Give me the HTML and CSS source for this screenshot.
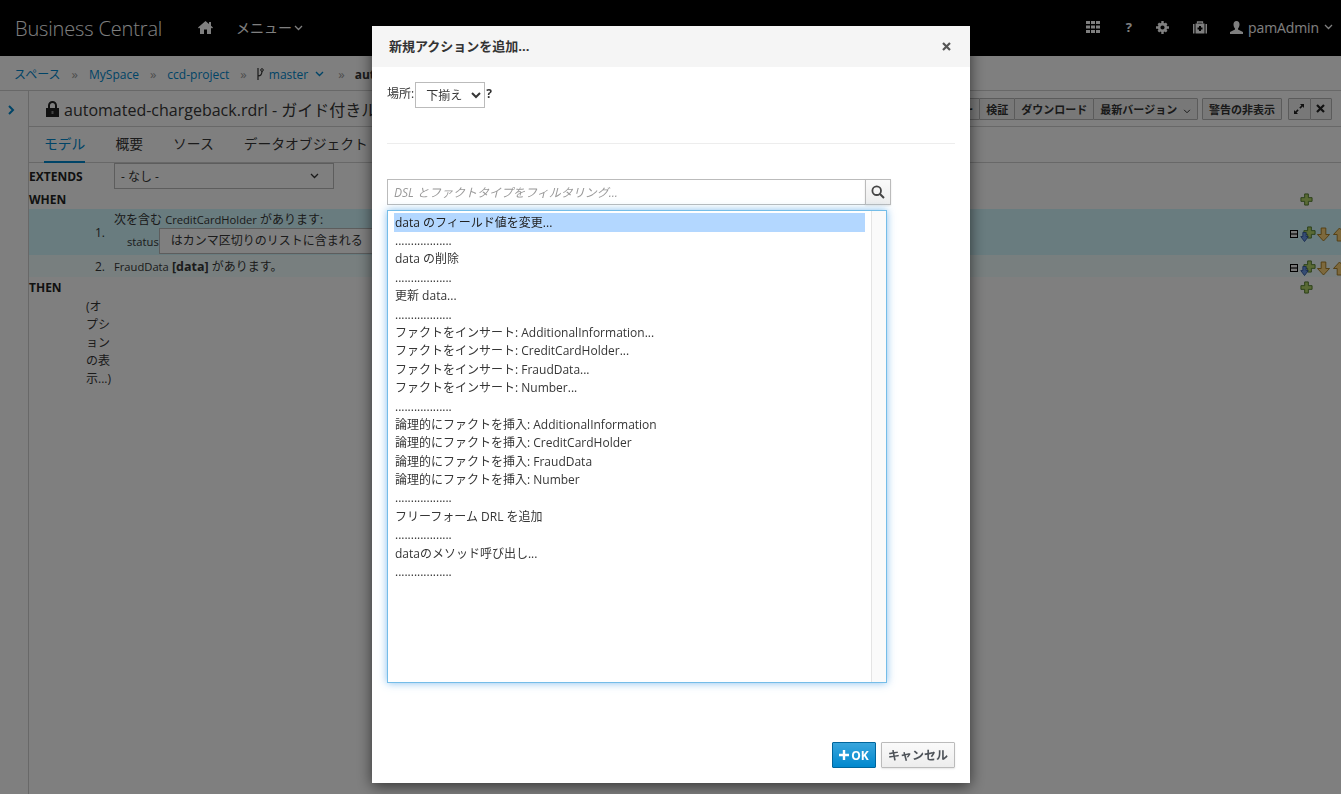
FILE: index.html
```html
<!DOCTYPE html>
<html>
<head>
  <meta charset="UTF-8">
  <title>Business Central</title>
  <link rel="stylesheet" href="styles.css">
</head>
<body>
  <svg class="defs" width="0" height="0">
    <symbol id="green-plus" viewBox="0 0 14 14">
      <path d="M5 1h4v4h4v4H9v4H5V9H1V5h4z" fill="#b5d56a" stroke="#4f7a28"/>
    </symbol>
    <symbol id="blue-down" viewBox="0 0 10 12">
      <path d="M3 .5h4v5h2.500L5 11.500.5 5.500H3z" fill="#6d9be8" stroke="#2a4f9c"/>
    </symbol>
    <symbol id="orange-down" viewBox="0 0 14 15">
      <path d="M4.500 .5h5v7H13.500L7 14.500.5 7.500h4z" fill="#fbd27a" stroke="#a67a1e"/>
    </symbol>
    <symbol id="orange-up" viewBox="0 0 14 15">
      <path d="M4.500 14.500h5v-7H13.500L7 .5.5 7.500h4z" fill="#fbd27a" stroke="#a67a1e"/>
    </symbol>
  </svg>

  <header class="topbar">
    <span class="brand">Business Central</span>
    <svg class="home-icon" width="15" height="13" viewBox="0 0 15 13"><path d="M7.500 0 0 6.500l1 1 1-.8V13h4V8.500h3V13h4V6.700l1 .8 1-1-2-1.800V1h-2v2z" fill="#fff"/></svg>
    <span class="nav-menu">メニュー</span>
    <svg class="chevron" width="9" height="6" viewBox="0 0 9 6"><path d="M1 1l3.500 3.500L8 1" fill="none" stroke="#fff" stroke-width="1.300"/></svg>
    <div class="topbar-right">
      <svg class="grid-icon" width="14" height="12" viewBox="0 0 14 12"><path d="M0 0h4v3H0zM5 0h4v3H5zM10 0h4v3h-4zM0 4.500h4v3H0zM5 4.500h4v3H5zM10 4.500h4v3h-4zM0 9h4v3H0zM5 9h4v3H5zM10 9h4v3h-4z" fill="#fff"/></svg>
      <span class="help-mark">?</span>
      <svg width="13" height="13" viewBox="0 0 13 13"><circle cx="6.500" cy="6.500" r="3.400" fill="none" stroke="#fff" stroke-width="2.600"/><path d="M5.300 0h2.400v2.500H5.300zM5.300 10.500h2.400V13H5.300zM0 5.300h2.500v2.400H0zM10.500 5.300H13v2.400h-2.500zM1.500 3.200 3.200 1.500 5 3.300 3.300 5zM9.800 11.500 11.500 9.800 9.700 8 8 9.700zM1.500 9.800 3.200 11.500 5 9.700 3.300 8zM9.800 1.500 11.500 3.200 9.700 5 8 3.300z" fill="#fff"/></svg>
      <svg width="14" height="13" viewBox="0 0 14 13"><path d="M4.500 2.500V1h5v1.500" fill="none" stroke="#fff" stroke-width="1.300"/><rect x="2.500" y="2.500" width="9" height="10" fill="#fff"/><rect x="0" y="3" width="1.500" height="9.500" fill="#fff"/><rect x="12.500" y="3" width="1.500" height="9.500" fill="#fff"/><path d="M6 5h2v1.500h1.500v2H8V10H6V8.500H4.500v-2H6z" fill="#000"/></svg>
      <span class="user-block">
        <svg width="13" height="13" viewBox="0 0 13 13"><path d="M6.500 0C8.500 0 9.500 1.500 9.500 3.500S8.500 7 8 7.500v1l5 2.500v2H0v-2l5-2.500v-1C4.500 7 3.500 5.500 3.500 3.500S4.500 0 6.500 0z" fill="#fff"/></svg>
        <span class="user-name">pamAdmin</span>
        <svg class="chevron" width="9" height="6" viewBox="0 0 9 6"><path d="M1 1l3.500 3.500L8 1" fill="none" stroke="#fff" stroke-width="1.300"/></svg>
      </span>
    </div>
  </header>

  <nav class="crumbs">
    <a>スペース</a><span class="sep">»</span>
    <a>MySpace</a><span class="sep">»</span>
    <a>ccd-project</a><span class="sep">»</span>
    <svg class="branch-icon" width="8" height="12" viewBox="0 0 8 12"><path d="M2 0v12M2 8c3 0 4-2 4-5" fill="none" stroke="#333" stroke-width="1.200"/><circle cx="6" cy="2" r="1.300" fill="none" stroke="#333"/></svg>
    <a>master</a>
    <svg class="crumb-chevron" width="9" height="6" viewBox="0 0 9 6"><path d="M1 1l3.500 3.500L8 1" fill="none" stroke="#0088ce" stroke-width="1.400"/></svg>
    <span class="sep last-sep">»</span>
    <b>automated-chargeback.rdrl</b>
  </nav>

  <div class="workspace">
    <aside class="side-rail">
      <svg width="7" height="10" viewBox="0 0 7 10"><path d="M1 1l4 4-4 4" fill="none" stroke="#0088ce" stroke-width="2"/></svg>
    </aside>
    <main class="editor">
      <div class="title-row">
        <svg class="lock-icon" width="13" height="16" viewBox="0 0 13 16"><path d="M3 7V4.500a3.500 3.500 0 0 1 7 0V7" fill="none" stroke="#222" stroke-width="2"/><path d="M0 7h13v9H0z" fill="#222"/><rect x="5.500" y="10" width="2" height="3" fill="#888"/></svg>
        <span class="file-title">automated-chargeback.rdrl - ガイド付きルール</span>
        <div class="toolbar">
          <div class="btn-group">
            <button>保存</button><button>削除</button><button>名前の変更</button><button>コピー</button><button>検証</button><button>ダウンロード</button><button class="version-btn">最新バージョン
              <svg width="8" height="5" viewBox="0 0 9 6"><path d="M1 1l3.500 3.500L8 1" fill="none" stroke="#333" stroke-width="1.200"/></svg></button>
          </div>
          <button class="hide-alerts">警告の非表示</button>
          <div class="btn-group">
            <button class="icon-btn"><svg width="10" height="10" viewBox="0 0 10 10"><path d="M6 0h4v4L8.600 2.600 6.500 4.700 5.300 3.500 7.400 1.400zM4 10H0V6l1.400 1.400 2.100-2.100 1.200 1.200-2.100 2.100z" fill="#222"/></svg></button><button class="icon-btn"><svg width="9" height="9" viewBox="0 0 9 9"><path d="M1 1l7 7M8 1 1 8" stroke="#222" stroke-width="2.200"/></svg></button>
          </div>
        </div>
      </div>
      <div class="tabs">
        <a class="tab active">モデル</a>
        <a class="tab">概要</a>
        <a class="tab">ソース</a>
        <a class="tab">データオブジェクト</a>
      </div>
      <section class="rule-area">
        <div class="extends-row">
          <b class="rule-word extends-word">EXTENDS</b>
          <div class="fake-select">- なし -
            <svg width="9" height="6" viewBox="0 0 9 6"><path d="M1 1l3.500 3.500L8 1" fill="none" stroke="#333" stroke-width="1.300"/></svg>
          </div>
        </div>
        <div class="section-row">
          <b class="rule-word">WHEN</b>
          <svg class="row-plus" width="13" height="13"><use href="#green-plus"/></svg>
        </div>
        <div class="rule-row selected">
          <span class="rule-num">1.</span>
          <div class="rule-body">
            <div>次を含む <span class="latin">CreditCardHolder</span> があります:</div>
            <div class="field-line"><span class="latin">status</span><span class="op-select">はカンマ区切りのリストに含まれる</span></div>
          </div>
          <div class="row-tools">
            <span class="minus-box"></span>
            <span class="plus-down"><svg class="pd-plus" width="13" height="13"><use href="#green-plus"/></svg><svg class="pd-down" width="9" height="10"><use href="#blue-down"/></svg></span>
            <svg class="arrow-down" width="13" height="15"><use href="#orange-down"/></svg>
            <svg class="arrow-up" width="13" height="15"><use href="#orange-up"/></svg>
          </div>
        </div>
        <div class="rule-row plain">
          <span class="rule-num">2.</span>
          <div class="rule-body"><span class="latin">FraudData</span> <b class="data-tag">[data]</b> があります。</div>
          <div class="row-tools">
            <span class="minus-box"></span>
            <span class="plus-down"><svg class="pd-plus" width="13" height="13"><use href="#green-plus"/></svg><svg class="pd-down" width="9" height="10"><use href="#blue-down"/></svg></span>
            <svg class="arrow-down" width="13" height="15"><use href="#orange-down"/></svg>
            <svg class="arrow-up" width="13" height="15"><use href="#orange-up"/></svg>
          </div>
        </div>
        <div class="section-row">
          <b class="rule-word">THEN</b>
          <svg class="row-plus" width="13" height="13"><use href="#green-plus"/></svg>
        </div>
        <div class="show-options">(オプションの表示...)</div>
      </section>
    </main>
  </div>

  <div class="backdrop"></div>

  <div class="modal">
    <div class="modal-header">
      <span class="modal-title">新規アクションを追加...</span>
      <svg width="9" height="9" viewBox="0 0 9 9"><path d="M1 1l7 7M8 1 1 8" stroke="#555" stroke-width="2.200"/></svg>
    </div>
    <div class="modal-body">
      <div class="place-row">
        <span class="place-label">場所:</span>
        <select class="place-select"><option>下揃え</option></select>
        <b class="place-help">?</b>
      </div>
      <hr class="modal-rule">
      <div class="filter-row">
        <input class="filter-input" placeholder="DSL とファクトタイプをフィルタリング...">
        <button class="filter-btn"><svg width="14" height="14" viewBox="0 0 14 14"><circle cx="5.700" cy="5.700" r="4.300" fill="none" stroke="#444" stroke-width="1.800"/><path d="M9 9l4 4" stroke="#444" stroke-width="2"/></svg></button>
      </div>
      <div class="action-list">
        <div class="action-items">
          <div class="action-item picked">data のフィールド値を変更...</div>
          <div class="action-item">..................</div>
          <div class="action-item">data の削除</div>
          <div class="action-item">..................</div>
          <div class="action-item">更新 data...</div>
          <div class="action-item">..................</div>
          <div class="action-item">ファクトをインサート: AdditionalInformation...</div>
          <div class="action-item">ファクトをインサート: CreditCardHolder...</div>
          <div class="action-item">ファクトをインサート: FraudData...</div>
          <div class="action-item">ファクトをインサート: Number...</div>
          <div class="action-item">..................</div>
          <div class="action-item">論理的にファクトを挿入: AdditionalInformation</div>
          <div class="action-item">論理的にファクトを挿入: CreditCardHolder</div>
          <div class="action-item">論理的にファクトを挿入: FraudData</div>
          <div class="action-item">論理的にファクトを挿入: Number</div>
          <div class="action-item">..................</div>
          <div class="action-item">フリーフォーム DRL を追加</div>
          <div class="action-item">..................</div>
          <div class="action-item">dataのメソッド呼び出し...</div>
          <div class="action-item">..................</div>
        </div>
        <div class="list-scroll"></div>
      </div>
      <div class="modal-footer">
        <button class="btn-ok"><svg width="10" height="10" viewBox="0 0 10 10"><path d="M3.800 0h2.400v3.800H10v2.400H6.200V10H3.800V6.200H0V3.800h3.800z" fill="#fff"/></svg>OK</button>
        <button class="btn-cancel">キャンセル</button>
      </div>
    </div>
  </div>
</body>
</html>
```

FILE: styles.css
```css
* {
  box-sizing: border-box;
}
html, body {
  height: 100%;
}
body {
  margin: 0;
  height: 794px;
  overflow: hidden;
  font-family: "Open Sans", "Noto Sans CJK JP", sans-serif;
  font-size: 12px;
  color: #363636;
  background-color: #fff;
  display: flex;
  flex-direction: column;
}
.defs {
  position: absolute;
}

/* top bar */
.topbar {
  height: 56px;
  flex: none;
  background-color: #000;
  color: #fff;
  display: flex;
  align-items: center;
  padding-left: 15px;
}
.brand {
  font-size: 20px;
  font-weight: 300;
  letter-spacing: -0.15px;
  width: 183px;
}
.home-icon {
  margin-right: 23px;
  position: relative;
  top: -1px;
}
.nav-menu {
  font-size: 14px;
  margin-right: 2px;
  position: relative;
  top: -1px;
}
.topbar-right {
  margin-left: auto;
  display: flex;
  align-items: center;
  gap: 24px;
  padding-right: 8px;
  position: relative;
  top: -1px;
}
.grid-icon {
  margin-right: 2px;
}
.help-mark {
  font-weight: 700;
  font-size: 13px;
}
.user-block {
  display: flex;
  align-items: center;
  gap: 5px;
  margin-left: -1px;
}
.user-name {
  font-size: 14px;
  letter-spacing: -0.1px;
}

/* breadcrumb */
.crumbs {
  height: 35px;
  flex: none;
  display: flex;
  align-items: center;
  padding: 2px 0 0 14px;
  background-color: #fff;
  border-bottom: 1px solid #d1d1d1;
  white-space: nowrap;
}
.crumbs a {
  color: #0088ce;
}
.sep {
  color: #9c9c9c;
  margin: 0 11px;
  font-size: 13px;
}
.last-sep {
  margin-left: 14px;
  margin-right: 10px;
}
.branch-icon {
  margin: 0 5px 0 -2px;
}
.crumb-chevron {
  margin-left: 7px;
}

/* editor */
.workspace {
  flex: 1;
  display: flex;
  background-color: #fff;
}
.side-rail {
  width: 29px;
  flex: none;
  border-right: 1px solid #d1d1d1;
  padding: 11px 0 0 8px;
}
.editor {
  flex: 1;
  min-width: 0;
}
.title-row {
  height: 36px;
  display: flex;
  align-items: center;
  padding-left: 17px;
  padding-right: 9px;
  border-bottom: 1px solid #d1d1d1;
}
.lock-icon {
  margin-right: 5px;
}
.file-title {
  font-size: 16px;
  white-space: nowrap;
}
.toolbar {
  margin-left: auto;
  display: flex;
  gap: 4px;
  height: 22px;
}
.btn-group {
  display: flex;
}
.btn-group button + button {
  margin-left: -1px;
}
.toolbar button {
  height: 22px;
  padding: 0 6px;
  font-family: inherit;
  font-size: 11px;
  font-weight: 600;
  color: #333;
  background-color: #f1f1f1;
  border: 1px solid #b7b7b7;
  border-radius: 1px;
  white-space: nowrap;
}
.version-btn svg {
  margin-left: 3px;
}
.hide-alerts {
  margin-right: 2px;
}
.toolbar .icon-btn {
  width: 22.5px;
  padding: 0;
  display: flex;
  align-items: center;
  justify-content: center;
}
.tabs {
  height: 36px;
  display: flex;
  gap: 30px;
  padding-left: 15px;
  border-bottom: 1px solid #d1d1d1;
}
.tab {
  font-size: 13.8px;
  line-height: 33px;
  height: 36px;
}
.tab.active {
  color: #0088ce;
  border-bottom: 2px solid #0088ce;
}
.extends-row {
  display: flex;
  align-items: center;
  height: 26px;
}
.rule-word {
  font-size: 12px;
  font-weight: 700;
  color: #222;
}
.extends-word {
  width: 85px;
}
.fake-select {
  width: 220px;
  height: 26px;
  padding: 0 14px 0 6px;
  display: flex;
  align-items: center;
  justify-content: space-between;
  background-color: #fff;
  border: 1px solid #bbb;
}
.section-row {
  height: 20px;
  display: flex;
  align-items: center;
  justify-content: space-between;
  padding-right: 28px;
}
.rule-row {
  display: flex;
  align-items: center;
}
.rule-row.selected {
  height: 46px;
  background-color: #d2f8ff;
}
.rule-row.plain {
  height: 22px;
  background-color: #f0ffff;
}
.rule-num {
  width: 76px;
  text-align: right;
  margin-right: 9px;
}
.rule-body {
  flex: 1;
  white-space: nowrap;
}
.latin {
  font-size: 11.200px;
}
.data-tag {
  font-size: 12.500px;
}
.field-line {
  padding-left: 13px;
  display: flex;
  align-items: center;
}
.op-select {
  height: 26px;
  padding: 0 11px;
  line-height: 24px;
  width: 240px;
  font-size: 12px;
  border: 1px solid #bbb;
  background-color: #fff;
}
.row-tools {
  flex: none;
  width: 51px;
  height: 16px;
  margin-top: 4px;
  display: flex;
  align-items: center;
  overflow: hidden;
}
.minus-box {
  width: 8px;
  height: 8px;
  flex: none;
  border: 1px solid #000;
  background: linear-gradient(#eee 0 2px, #666 2px 4px, #eee 4px);
  margin-right: 2px;
}
.plus-down {
  position: relative;
  width: 16px;
  height: 16px;
  flex: none;
}
.pd-plus {
  position: absolute;
  top: 0;
  left: 3px;
}
.pd-down {
  position: absolute;
  top: 6px;
  left: 0;
}
.row-tools svg {
  flex: none;
}
.arrow-down {
  margin-left: 1px;
  margin-right: 3px;
}
.show-options {
  width: 27px;
  margin-left: 57px;
  margin-top: 1px;
  line-height: 18px;
}

/* overlay + dialog */
.backdrop {
  position: fixed;
  inset: 0;
  background-color: rgba(0, 0, 0, 0.5);
}
.modal {
  position: fixed;
  left: 372px;
  top: 26px;
  width: 598px;
  height: 757px;
  background-color: #fff;
  display: flex;
  flex-direction: column;
  box-shadow: 0 3px 14px rgba(0, 0, 0, 0.6);
}
.modal-header {
  height: 41px;
  flex: none;
  padding: 0 19px 0 17px;
  display: flex;
  align-items: center;
  justify-content: space-between;
  background-color: #f5f5f5;
}
.modal-title {
  font-size: 13px;
  font-weight: 700;
  color: #333;
  margin-top: -2px;
}
.modal-body {
  flex: 1;
  display: flex;
  flex-direction: column;
  padding: 15px;
}
.place-row {
  display: flex;
  align-items: center;
  height: 26px;
}
.place-label {
  margin-top: -5px;
  margin-right: 1px;
}
.place-select {
  width: 70px;
  height: 26px;
  padding-left: 6px;
  font-family: inherit;
  font-size: 12px;
  color: #363636;
  background-color: #fff;
  border: 1px solid #bbb;
  border-radius: 0;
}
.place-help {
  margin-top: -4px;
  margin-left: 1px;
  color: #333;
}
.modal-rule {
  width: 100%;
  height: 1px;
  margin: 35px 0 35px;
  border: 0;
  background-color: #ededed;
}
.filter-row {
  display: flex;
  width: 504px;
  height: 26px;
}
.filter-input {
  flex: 1;
  min-width: 0;
  padding: 0 6px;
  font-family: inherit;
  font-size: 12px;
  border: 1px solid #bbb;
  outline: 0;
}
.filter-input::placeholder {
  color: #999;
  font-style: italic;
}
.filter-btn {
  width: 26px;
  flex: none;
  padding: 0;
  margin-left: -1px;
  display: flex;
  align-items: center;
  justify-content: center;
  border: 1px solid #bbb;
  background: linear-gradient(#fafafa, #ededed);
  box-shadow: 0 1px 2px rgba(0, 0, 0, 0.1);
}
.action-list {
  width: 500px;
  height: 473px;
  margin-top: 5px;
  display: flex;
  border: 1px solid #75bde8;
  box-shadow: 0 0 8px rgba(102, 175, 233, 0.8);
}
.action-items {
  flex: 1;
  padding: 2px 6px;
}
.action-item {
  height: 18.400px;
  line-height: 18.400px;
  white-space: nowrap;
  color: #363636;
  padding-left: 1px;
}
.action-item.picked {
  background-color: #b3d7ff;
  height: 19px;
  line-height: 20px;
  color: #222;
}
.list-scroll {
  width: 15px;
  flex: none;
  border-left: 1px solid #e4e4e4;
  background-color: #fafafa;
}
.modal-footer {
  margin-top: auto;
  display: flex;
  justify-content: flex-end;
  gap: 5px;
}
.modal-footer button {
  height: 26px;
  font-family: inherit;
  font-size: 12px;
  font-weight: 700;
  border-radius: 1px;
}
.btn-ok {
  width: 44px;
  padding: 0;
  color: #fff;
  display: flex;
  align-items: center;
  justify-content: center;
  gap: 2px;
  background: linear-gradient(#39a5dc, #0088ce);
  border: 1px solid #00659c;
}
.btn-cancel {
  width: 74px;
  padding: 0;
  color: #4d5258;
  background: linear-gradient(#fafafa, #ededed);
  border: 1px solid #bbb;
  box-shadow: 0 1px 2px rgba(0, 0, 0, 0.1);
}
```
